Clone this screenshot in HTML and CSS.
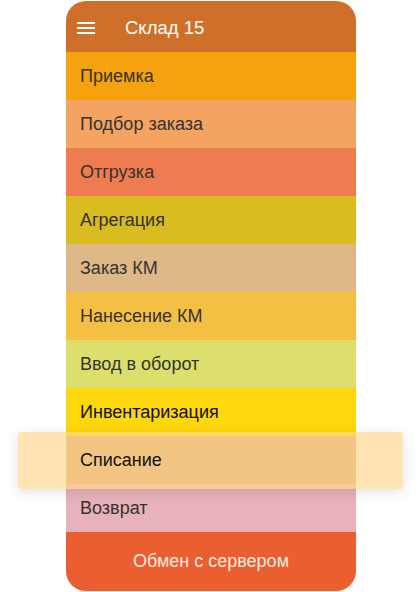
FILE: index.html
```html
<!DOCTYPE html>
<html lang="ru">
<head>
    <meta charset="UTF-8">
    <meta name="viewport" content="width=device-width, initial-scale=1.0">
    <title>Склад 15</title>
    <link rel="stylesheet" href="styles.css">
</head>
<body>

<div class="phone">
    <!-- Top bar -->
    <div class="app-bar">
        <svg class="menu-icon" width="18" height="14" viewBox="0 0 18 14">
            <rect x="0" y="1" width="18" height="2" fill="#fff"/>
            <rect x="0" y="6" width="18" height="2" fill="#fff"/>
            <rect x="0" y="11" width="18" height="2" fill="#fff"/>
        </svg>
        <span class="app-title">Склад 15</span>
    </div>

    <!-- Operations -->
    <ul class="menu">
        <li class="item item-receive">Приемка</li>
        <li class="item item-pick">Подбор заказа</li>
        <li class="item item-ship">Отгрузка</li>
        <li class="item item-aggr">Агрегация</li>
        <li class="item item-order">Заказ КМ</li>
        <li class="item item-apply">Нанесение КМ</li>
        <li class="item item-input">Ввод в оборот</li>
        <li class="item item-inventory">Инвентаризация</li>
        <li class="item item-writeoff selected">
            <span class="item-label">Списание</span>
        </li>
        <li class="item item-return">Возврат</li>
    </ul>

    <button class="sync-btn">Обмен с сервером</button>
</div>

</body>
</html>
```

FILE: styles.css
```css
body {
    margin: 0;
    padding: 0;
    background-color: #fff;
    font-family: "Liberation Sans", Arial, sans-serif;
}

.phone {
    width: 290px;
    margin: 1px 0 0 66px;
    display: flex;
    flex-direction: column;
}

.app-bar {
    height: 51px;
    background-color: #CE7029;
    border-radius: 20px 20px 0 0;
    display: flex;
    align-items: center;
    padding-left: 11px;
}

.menu-icon {
    display: block;
    margin-top: 2px;
}

.app-title {
    color: #fff;
    font-size: 18.5px;
    margin-left: 30px;
    margin-top: 2px;
}

.menu {
    list-style: none;
    margin: 0;
    padding: 0;
}

.item {
    height: 48px;
    display: flex;
    align-items: center;
    padding-left: 14px;
    padding-top: 1px;
    box-sizing: border-box;
    font-size: 18px;
    color: #333;
}

.item-receive { background-color: #F5A20E; }
.item-pick { background-color: #F4A460; }
.item-ship { background-color: #EF7B50; }
.item-aggr { background-color: #D9BC1F; }
.item-order { background-color: #DEB887; }
.item-apply { background-color: #F4C043; }
.item-input { background-color: #DCDF6B; }
.item-inventory { background-color: #FFD70D; color: #111; }
.item-writeoff { background-color: #DBA670; color: #111; }
.item-return { background-color: #E8B2BA; }

/* selected row: floating highlight wider than the screen */
.selected {
    position: relative;
}

.selected::before {
    content: "";
    position: absolute;
    left: -48px;
    right: -47px;
    top: -4px;
    bottom: -5px;
    background-color: rgba(255, 214, 140, 0.65);
    border-radius: 4px;
    box-shadow: 0 3px 14px rgba(0, 0, 0, 0.12);
}

.item-label {
    position: relative;
}

.sync-btn {
    height: 59px;
    border: none;
    background-color: #EB5E30;
    color: #FDEBE3;
    font-family: inherit;
    font-size: 18px;
    border-radius: 0 0 20px 20px;
    padding: 0;
}
```
